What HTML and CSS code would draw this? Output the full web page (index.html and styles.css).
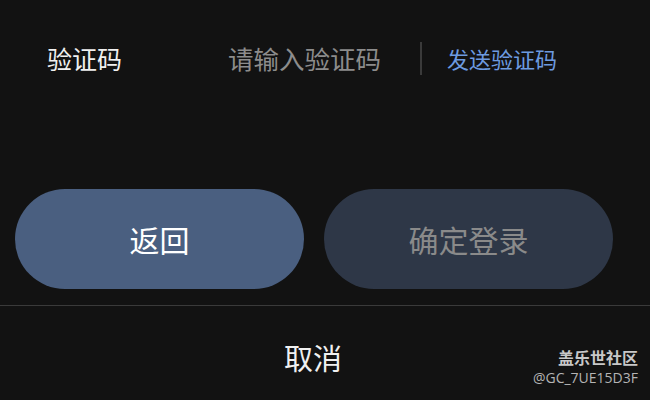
FILE: index.html
```html
<!DOCTYPE html>
<html lang="zh">
<head>
<meta charset="utf-8">
<link rel="stylesheet" href="styles.css">
</head>
<body>
<div class="page">
  <div class="row">
    <div class="label">验证码</div>
    <div class="input">请输入验证码</div>
    <div class="sep"></div>
    <div class="send">发送验证码</div>
  </div>
  <div class="buttons">
    <div class="btn back">返回</div>
    <div class="btn confirm">确定登录</div>
  </div>
  <div class="rule"></div>
  <div class="cancel">取消</div>
  <div class="mark">
    <div class="mark-title">盖乐世社区</div>
    <div class="mark-id">@GC_7UE15D3F</div>
  </div>
</div>
</body>
</html>
```
FILE: styles.css
```css
html, body {
  margin: 0;
  padding: 0;
  background: #121212;
}
.page {
  position: relative;
  width: 650px;
  height: 400px;
  overflow: hidden;
  font-family: "Noto Sans CJK SC", "Noto Sans", sans-serif;
  color: #eeeeee;
}
.row {
  display: flex;
  align-items: center;
  height: 34px;
  padding: 41px 0 0 47px;
}
.label {
  width: 181px;
  font-size: 25px;
  line-height: 34px;
  color: #f0f0f0;
}
.input {
  width: 192px;
  font-size: 25.5px;
  line-height: 34px;
  color: #8c8c8c;
}
.sep {
  width: 2px;
  height: 33px;
  background: #3a3a3a;
  margin-right: 25px;
}
.send {
  font-size: 22px;
  line-height: 34px;
  color: #6d9be0;
}
.buttons {
  display: flex;
  gap: 20px;
  padding: 114px 0 0 15px;
}
.btn {
  width: 289px;
  height: 100px;
  border-radius: 50px;
  display: flex;
  align-items: center;
  justify-content: center;
  font-size: 30px;
}
.back {
  background: #4a5f80;
  color: #ffffff;
}
.confirm {
  background: #2e3747;
  color: #8a8a8a;
}
.rule {
  height: 1px;
  background: #3a3a3a;
  margin-top: 16px;
}
.cancel {
  text-align: center;
  font-size: 29px;
  line-height: 40px;
  padding-top: 31px;
  padding-right: 24px;
  color: #f0f0f0;
}
.mark {
  position: absolute;
  right: 12px;
  top: 346px;
  text-align: right;
  color: #c8c8c8;
}
.mark-title {
  font-size: 16px;
  font-weight: bold;
  line-height: 22px;
}
.mark-id {
  font-family: "Open Sans", "Noto Sans", sans-serif;
  font-size: 14px;
  line-height: 20px;
  color: #b4b4b4;
}
```
